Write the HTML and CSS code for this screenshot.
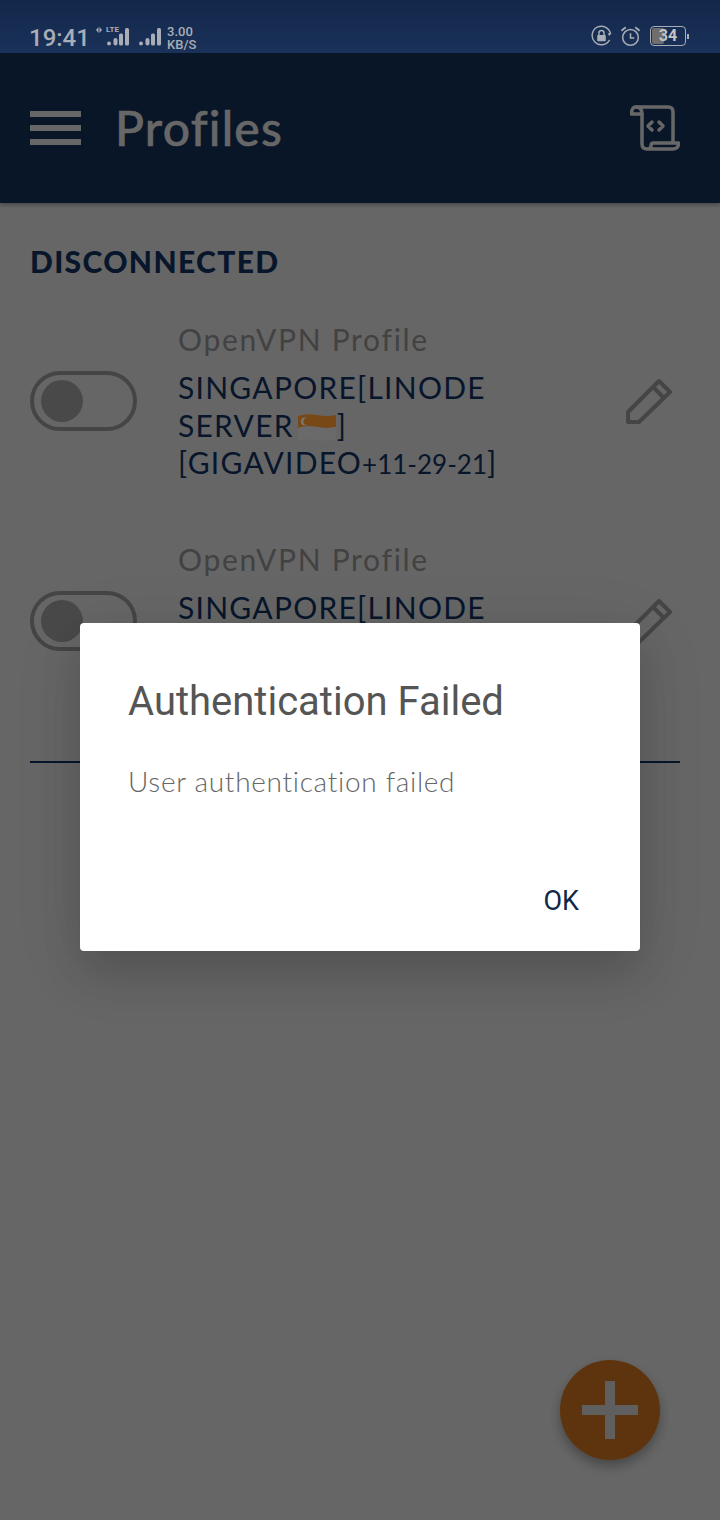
FILE: index.html
```html
<!DOCTYPE html>
<html lang="en">
<head>
  <meta charset="UTF-8" />
  <meta name="viewport" content="width=device-width, initial-scale=1" />
  <title>Profiles</title>
  <link rel="stylesheet" href="styles.css">
</head>
<body>
  <div class="app">
    <!-- Status bar -->
    <div class="status">
      <span class="time">19:41</span>
      <div class="net">
        <svg class="data-arrows" viewBox="0 0 6 6"><path d="M2.500 0 L0 3 L2.500 6 Z M3.500 0 L6 3 L3.500 6 Z"/></svg>
        <span class="lte">LTE</span>
        <svg class="bars" viewBox="0 0 22 18"><circle cx="2" cy="15.500" r="2"/><rect x="6.500" y="10" width="4" height="7.500" rx="2"/><rect x="12" y="5.500" width="4" height="12" rx="1.500"/><rect x="18" y="0" width="4" height="17.500" rx="1.500"/></svg>
      </div>
      <svg class="bars" viewBox="0 0 22 18"><circle cx="2" cy="15.500" r="2"/><rect x="6.500" y="10" width="4" height="7.500" rx="2"/><rect x="12" y="5.500" width="4" height="12" rx="1.500"/><rect x="18" y="0" width="4" height="17.500" rx="1.500"/></svg>
      <div class="speed"><span>3.00</span><span>KB/S</span></div>
      <div class="status-right">
        <svg class="status-icon" viewBox="0 0 22 22"><path d="M19.500 15 A9.700 9.700 0 1 1 20.500 9" fill="none" stroke="currentColor" stroke-width="1.500"/><path d="M21.500 8 L19 11 L17.500 8 Z" fill="currentColor"/><rect x="6.500" y="10" width="9" height="6.500" rx="1" fill="currentColor"/><path d="M8.300 10 V8 a2.700 2.700 0 0 1 5.400 0 V10" fill="none" stroke="currentColor" stroke-width="1.500"/></svg>
        <svg class="status-icon" viewBox="0 0 22 22"><circle cx="11" cy="12.500" r="8.200" fill="none" stroke="currentColor" stroke-width="1.600"/><path d="M11 8 V13 H15" fill="none" stroke="currentColor" stroke-width="1.600"/><path d="M1.500 5.500 L6 1.800 M20.500 5.500 L16 1.800" fill="none" stroke="currentColor" stroke-width="1.800"/></svg>
        <div class="battery">
          <div class="battery-body"><div class="battery-fill"></div><span class="battery-num">34</span></div>
          <div class="battery-tip"></div>
        </div>
      </div>
    </div>

    <!-- Toolbar -->
    <div class="toolbar">
      <div class="menu"><i></i><i></i><i></i></div>
      <div class="toolbar-title">Profiles</div>
      <svg class="script-icon" viewBox="0 0 50 46" fill="none" stroke="currentColor" stroke-width="3.500" stroke-linejoin="round" stroke-linecap="round">
        <path d="M6 2 H38 Q43 2 43 7 V37"/>
        <path d="M6 2 Q12 2 12 9 H1.500 Q1.500 2 6 2 Z"/>
        <path d="M12 9 V39 Q12 44 17 44 H43 Q48.500 44 48.500 38 H23 Q21 38 21 41 Q21 44 17 44"/>
        <path d="M22 17 L18 21 L22 25 M29 17 L33 21 L29 25"/>
      </svg>
    </div>

    <div class="content">
      <div class="section-title">DISCONNECTED</div>

      <div class="profile">
        <div class="toggle"><div class="knob"></div></div>
        <div class="profile-text">
          <div class="profile-type">OpenVPN Profile</div>
          <div class="profile-name">SINGAPORE[LINODE<br>SERVER<svg class="flag" viewBox="0 0 40 30"><path d="M1 3 Q10 0 20 2 T39 2 V14 Q30 16 20 14 T1 15 Z" fill="#ff9a30"/><path d="M1 15 Q10 12 20 14 T39 14 V26 Q30 29 20 27 T1 28 Z" fill="#e2e2e2"/><circle cx="8" cy="8.500" r="4" fill="#fff"/><circle cx="10" cy="8.500" r="3.600" fill="#ff9a30"/></svg>]<br>[GIGAVIDEO<span class="nums">+11-29-21</span>]</div>
        </div>
        <svg class="edit" viewBox="0 0 46 48" fill="none" stroke="currentColor" stroke-width="4" stroke-linejoin="round"><path d="M2 44 V34 L33 3 L44 14 L13 44 Z M27 9 L38 20"/></svg>
      </div>

      <div class="profile">
        <div class="toggle"><div class="knob"></div></div>
        <div class="profile-text">
          <div class="profile-type">OpenVPN Profile</div>
          <div class="profile-name">SINGAPORE[LINODE</div>
        </div>
        <svg class="edit" viewBox="0 0 46 48" fill="none" stroke="currentColor" stroke-width="4" stroke-linejoin="round"><path d="M2 44 V34 L33 3 L44 14 L13 44 Z M27 9 L38 20"/></svg>
      </div>

      <div class="divider"></div>
    </div>

    <div class="fab"><svg viewBox="0 0 56 58"><path d="M23 0 H33 V24 H56 V34 H33 V58 H23 V34 H0 V24 H23 Z" fill="#cacaca"/></svg></div>

    <!-- Dialog + scrim -->
    <div class="scrim">
      <div class="dialog">
        <div class="dialog-title">Authentication Failed</div>
        <div class="dialog-msg">User authentication failed</div>
        <div class="dialog-actions"><span class="dialog-btn">OK</span></div>
      </div>
    </div>
  </div>
</body>
</html>
```

FILE: styles.css
```css
* {
  box-sizing: border-box;
}

body {
  margin: 0;
  background: #d9d9d9;
  font-family: 'Lato', sans-serif;
}

.app {
  position: relative;
  width: 720px;
  height: 1520px;
  overflow: hidden;
  background: #d9d9d9;
}

/* Status bar */
.status {
  height: 53px;
  background: linear-gradient(#13274a, #1a3159);
  color: #a9adb5;
  display: flex;
  align-items: flex-end;
  padding: 0 31px 0 29px;
  position: relative;
  z-index: 2;
}

.time {
  font-family: 'Roboto', sans-serif;
  font-weight: 500;
  font-size: 24px;
  line-height: 28px;
  margin-bottom: 1px;
  width: 78px;
}

.net {
  position: relative;
  margin-right: 10px;
  margin-bottom: 7px;
}

.data-arrows {
  position: absolute;
  left: -11px;
  top: -1px;
  width: 6px;
  height: 6px;
  fill: currentColor;
}

.lte {
  position: absolute;
  left: -1px;
  top: -2px;
  font-family: 'Roboto', sans-serif;
  font-weight: 700;
  font-size: 8px;
  line-height: 8px;
}

.bars {
  display: block;
  width: 22px;
  height: 18px;
  fill: currentColor;
  margin-bottom: 7px;
}

.net .bars {
  margin-bottom: 0;
}

.speed {
  display: flex;
  flex-direction: column;
  margin-left: 6px;
  margin-bottom: 2px;
  font-family: 'Roboto', sans-serif;
  font-weight: 500;
  font-size: 13px;
  line-height: 13px;
}

.status-right {
  margin-left: auto;
  display: flex;
  align-items: center;
  gap: 8px;
  margin-bottom: 6px;
}

.status-icon {
  width: 21px;
  height: 22px;
}

.battery {
  display: flex;
  align-items: center;
  margin-left: 1px;
}

.battery-body {
  position: relative;
  width: 36px;
  height: 20px;
  border: 1px solid currentColor;
  border-radius: 4px;
  overflow: hidden;
  text-align: center;
}

.battery-fill {
  position: absolute;
  left: 1px;
  top: 1px;
  bottom: 1px;
  width: 12px;
  border-radius: 2px;
  background: #6e6e6e;
}

.battery-num {
  position: relative;
  display: block;
  font-family: 'Roboto', sans-serif;
  font-weight: 700;
  font-size: 16px;
  line-height: 18px;
  color: #c4c4c4;
}

.battery-tip {
  width: 2px;
  height: 5px;
  margin-left: 1px;
  background: currentColor;
}

/* Toolbar */
.toolbar {
  height: 150px;
  background: #142f55;
  color: #dcdcdc;
  display: flex;
  align-items: center;
  padding: 0 40px 0 30px;
  box-shadow: 0 2px 4px rgba(0, 0, 0, 0.3);
}

.menu {
  display: flex;
  flex-direction: column;
  gap: 8px;
  width: 51px;
}

.menu i {
  display: block;
  height: 6px;
  background: #dcdcdc;
}

.toolbar-title {
  margin-left: 34px;
  font-weight: 500;
  font-size: 48px;
  line-height: 56px;
  letter-spacing: 1.2px;
  -webkit-text-stroke: 0.5px #dcdcdc;
}

.script-icon {
  margin-left: auto;
  width: 50px;
  height: 46px;
}

/* List */
.content {
  padding: 36px 48px 0 30px;
}

.section-title {
  color: #122f5c;
  font-weight: 900;
  font-size: 30px;
  line-height: 44px;
  letter-spacing: 1.35px;
}

.profile {
  display: flex;
  align-items: flex-start;
  height: 220px;
}

.toggle {
  width: 107px;
  height: 60px;
  flex-shrink: 0;
  margin-top: 88px;
  border: 4px solid #929292;
  border-radius: 30px;
  display: flex;
  align-items: center;
  padding-left: 7px;
}

.knob {
  width: 42px;
  height: 42px;
  border-radius: 50%;
  background: #9c9c9c;
}

.profile-text {
  margin-left: 41px;
  margin-top: 37px;
  flex: 1;
}

.profile-type {
  color: #8c8c8c;
  font-size: 30px;
  line-height: 38px;
  margin-bottom: 11px;
  letter-spacing: 1.7px;
}

.profile-name {
  color: #122f5c;
  font-size: 30px;
  line-height: 37.500px;
  letter-spacing: 1.250px;
}

.nums {
  font-size: 26px;
  letter-spacing: 0;
}

.flag {
  width: 40px;
  height: 30px;
  margin-left: 3px;
  vertical-align: -6px;
}

.edit {
  width: 46px;
  height: 48px;
  flex-shrink: 0;
  margin-top: 95px;
  color: #929292;
}

.divider {
  height: 2px;
  margin-top: 38px;
  margin-right: -8px;
  background: #122f5c;
}

/* Add button */
.fab {
  position: absolute;
  left: 560px;
  top: 1360px;
  width: 100px;
  height: 100px;
  border-radius: 50%;
  background: #c8701f;
  box-shadow: 0 6px 12px rgba(0, 0, 0, 0.3);
  display: flex;
  align-items: center;
  justify-content: center;
}

.fab svg {
  width: 56px;
  height: 58px;
}

/* Dialog */
.scrim {
  position: absolute;
  left: 0;
  right: 0;
  top: 53px;
  bottom: 0;
  background: rgba(0, 0, 0, 0.53);
  display: flex;
  align-items: center;
  justify-content: center;
}

.dialog {
  width: 560px;
  height: 328px;
  background: #fff;
  border-radius: 4px;
  padding: 53px 61px 0 48px;
  box-shadow: 0 24px 40px rgba(0, 0, 0, 0.12), 0 14px 70px rgba(0, 0, 0, 0.1);
  display: flex;
  flex-direction: column;
}

.dialog-title {
  font-family: 'Roboto', sans-serif;
  font-weight: 400;
  font-size: 40px;
  line-height: 52px;
  color: #555;
}

.dialog-msg {
  margin-top: 35px;
  font-weight: 300;
  font-size: 28px;
  line-height: 36px;
  letter-spacing: 0.7px;
  color: #666;
}

.dialog-actions {
  margin-top: auto;
  margin-bottom: 30px;
  display: flex;
  justify-content: flex-end;
}

.dialog-btn {
  font-family: 'Roboto', sans-serif;
  font-size: 27px;
  line-height: 40px;
  color: #0f2748;
}
```
